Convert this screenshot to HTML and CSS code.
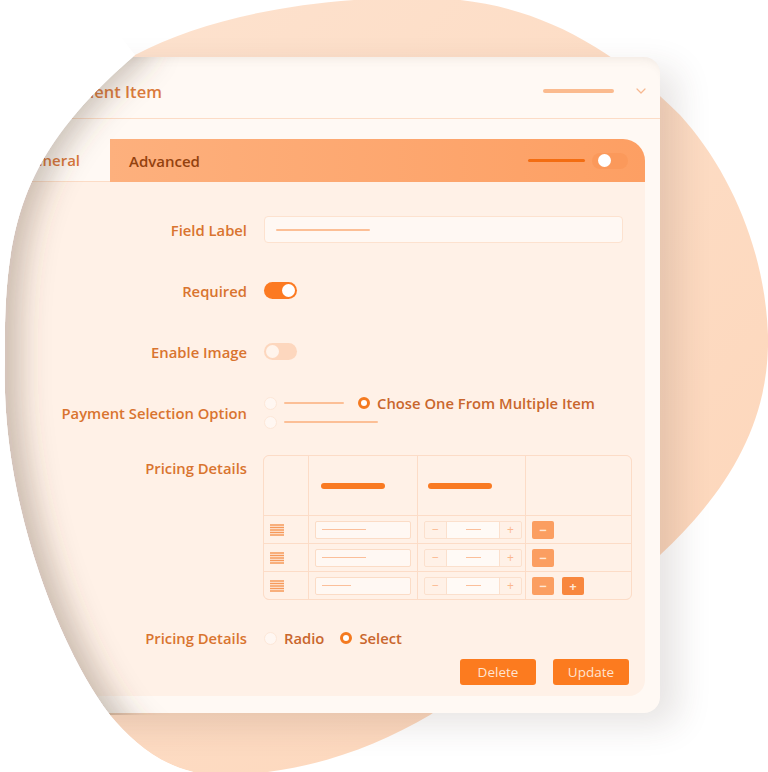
FILE: index.html
```html
<!DOCTYPE html>
<html lang="en">
<head>
    <meta charset="UTF-8">
    <meta name="viewport" content="width=device-width, initial-scale=1.0">
    <title>Payment Item</title>
    <link rel="stylesheet" href="styles.css">
</head>
<body>
    <div class="stage">
        <!-- peach blob behind the card -->
        <svg class="blob" viewBox="0 0 768 772" width="768" height="772">
            <defs>
                <linearGradient id="blobFill" x1="0" y1="0" x2="1" y2="1">
                    <stop offset="0" stop-color="#fde3d0"/>
                    <stop offset="1" stop-color="#fdd5b8"/>
                </linearGradient>
            </defs>
            <path fill="url(#blobFill)" d="M135 55 C210 15 320 -4 430 -2 C520 0 600 35 680 115 C730 170 765 250 768 335 C770 420 730 490 660 555 L430 715 C370 750 300 775 220 775 C170 775 135 745 110 715 C60 650 0 500 5 360 C3 220 25 150 135 55 Z"/>
        </svg>

        <div class="card">
            <div class="card-head">
                <span class="card-title">Payment Item</span>
                <span class="head-bar"></span>
                <svg class="chevron" width="10" height="6" viewBox="0 0 10 6">
                    <polyline points="1,1 5,5 9,1" fill="none" stroke="#f7b890" stroke-width="1.2" stroke-linecap="round" stroke-linejoin="round"/>
                </svg>
            </div>

            <div class="card-body">
                <div class="tabs">
                    <div class="tab tab-general">General</div>
                    <div class="tab tab-advanced">
                        <span>Advanced</span>
                        <span class="tab-line"></span>
                        <span class="switch switch-tab"></span>
                    </div>
                </div>

                <div class="panel">
                    <div class="form-row">
                        <label>Field Label</label>
                        <div class="text-input"><span class="ph"></span></div>
                    </div>

                    <div class="form-row">
                        <label>Required</label>
                        <div><span class="switch switch-on"></span></div>
                    </div>

                    <div class="form-row">
                        <label>Enable Image</label>
                        <div><span class="switch switch-off"></span></div>
                    </div>

                    <div class="form-row row-payment">
                        <label>Payment Selection Option</label>
                        <div class="radio-stack">
                            <div class="radio-line">
                                <span class="radio"></span>
                                <span class="ph ph-short"></span>
                                <span class="radio radio-checked"></span>
                                <span class="radio-text">Chose One From Multiple Item</span>
                            </div>
                            <div class="radio-line">
                                <span class="radio"></span>
                                <span class="ph ph-long"></span>
                            </div>
                        </div>
                    </div>

                    <div class="form-row row-table">
                        <label>Pricing Details</label>
                        <div class="price-table">
                            <div class="cell"></div>
                            <div class="cell head"><span class="head-pill"></span></div>
                            <div class="cell head head-qty"><span class="head-pill"></span></div>
                            <div class="cell"></div>

                            <div class="cell handle"><svg width="14" height="12" viewBox="0 0 14 12"><path d="M0 1h14M0 3.5h14M0 6h14M0 8.5h14M0 11h14" stroke="#f6995a" stroke-width="1.3"/></svg></div>
                            <div class="cell"><div class="mini-input"><span class="mini-line"></span></div></div>
                            <div class="cell"><div class="stepper"><span class="step">&minus;</span><span class="step-mid"><span class="mini-dash"></span></span><span class="step">+</span></div></div>
                            <div class="cell actions"><span class="act act-minus">&minus;</span></div>

                            <div class="cell handle"><svg width="14" height="12" viewBox="0 0 14 12"><path d="M0 1h14M0 3.5h14M0 6h14M0 8.5h14M0 11h14" stroke="#f6995a" stroke-width="1.3"/></svg></div>
                            <div class="cell"><div class="mini-input"><span class="mini-line"></span></div></div>
                            <div class="cell"><div class="stepper"><span class="step">&minus;</span><span class="step-mid"><span class="mini-dash"></span></span><span class="step">+</span></div></div>
                            <div class="cell actions"><span class="act act-minus">&minus;</span></div>

                            <div class="cell handle"><svg width="14" height="12" viewBox="0 0 14 12"><path d="M0 1h14M0 3.5h14M0 6h14M0 8.5h14M0 11h14" stroke="#f6995a" stroke-width="1.3"/></svg></div>
                            <div class="cell"><div class="mini-input"><span class="mini-line mini-line-short"></span></div></div>
                            <div class="cell"><div class="stepper"><span class="step">&minus;</span><span class="step-mid"><span class="mini-dash"></span></span><span class="step">+</span></div></div>
                            <div class="cell actions"><span class="act act-minus">&minus;</span><span class="act act-plus">+</span></div>
                        </div>
                    </div>

                    <div class="form-row row-type">
                        <label>Pricing Details</label>
                        <div class="radio-line">
                            <span class="radio"></span>
                            <span class="radio-text">Radio</span>
                            <span class="radio radio-checked"></span>
                            <span class="radio-text">Select</span>
                        </div>
                    </div>

                    <div class="button-row">
                        <button class="btn">Delete</button>
                        <button class="btn">Update</button>
                    </div>
                </div>
            </div>
        </div>

        <!-- white mask that cuts the card along the blob edge -->
        <svg class="edge-mask" viewBox="0 0 768 772" width="768" height="772">
            <defs>
                <filter id="edgeShadow" x="-50%" y="-10%" width="200%" height="120%">
                    <feDropShadow dx="16" dy="0" stdDeviation="14" flood-color="#5a4638" flood-opacity="0.3"/>
                </filter>
                <clipPath id="cardArea">
                    <rect x="-40" y="57" width="840" height="658"/>
                </clipPath>
            </defs>
            <g clip-path="url(#cardArea)">
                <path fill="#ffffff" filter="url(#edgeShadow)" d="M-40 -40 L135 -40 L135 55 C25 150 3 220 5 360 C0 500 60 650 110 715 C135 745 170 775 220 775 L220 820 L-40 820 Z"/>
            </g>
            <path fill="#ffffff" d="M-40 -40 L60 -40 L135 55 C25 150 3 220 5 360 C0 500 60 650 110 715 C135 745 170 775 220 775 L220 820 L-40 820 Z"/>
        </svg>
    </div>
</body>
</html>
```

FILE: styles.css
```css
/* Payment item card illustration */
body {
    margin: 0;
    padding: 0;
    background-color: #fff;
    font-family: "Open Sans", "Lato", sans-serif;
}

.stage {
    position: relative;
    width: 768px;
    height: 772px;
    overflow: hidden;
    background-color: #fff;
}

.blob,
.edge-mask {
    position: absolute;
    left: 0;
    top: 0;
}

.card {
    position: absolute;
    left: -10px;
    top: 57px;
    width: 670px;
    background-color: #fff9f4;
    border-radius: 16px;
    box-shadow: 18px 12px 34px rgba(70, 50, 40, 0.13), inset 0 10px 12px -10px rgba(90, 70, 60, 0.12);
}

/* header */
.card-head {
    display: flex;
    align-items: center;
    box-sizing: border-box;
    height: 62px;
    padding: 7px 14px 0 60px;
    border-bottom: 1px solid #fcdcc6;
}

.card-title {
    font-size: 16.5px;
    font-weight: 600;
    color: #dc7b3c;
}

.head-bar {
    width: 71px;
    height: 4px;
    margin-left: auto;
    margin-right: 22px;
    border-radius: 2px;
    background-color: #fbbb8f;
}

.chevron {
    display: block;
}

/* tabs */
.card-body {
    padding: 20px 15px 17px 0;
}

.tabs {
    display: flex;
    height: 43px;
}

.tab {
    display: flex;
    align-items: center;
    box-sizing: border-box;
    font-size: 15px;
    font-weight: 600;
}

.tab-general {
    width: 120px;
    padding-left: 33px;
    color: #d9763a;
    border-bottom: 1px solid #fcdcc6;
}

.tab-advanced {
    flex: 1;
    padding: 0 17px 0 19px;
    color: #93420f;
    border-top-right-radius: 22px;
    background: linear-gradient(90deg, #fdb07d, #fd9f63);
}

.tab-line {
    width: 57px;
    height: 3px;
    margin-left: auto;
    margin-right: 7px;
    border-radius: 2px;
    background-color: #f36d12;
}

/* switches */
.switch {
    position: relative;
    display: block;
    border-radius: 9px;
}

.switch::after {
    content: "";
    position: absolute;
    top: 2px;
    width: 13px;
    height: 13px;
    border-radius: 50%;
    background-color: #fff;
}

.switch-tab {
    width: 36px;
    height: 16px;
    background-color: #fb995b;
}

.switch-tab::after {
    top: 1.5px;
    left: 6px;
}

.switch-on {
    width: 33px;
    height: 17px;
    background-color: #fc7a22;
}

.switch-on::after {
    right: 2px;
}

.switch-off {
    width: 33px;
    height: 17px;
    background-color: #fdd7be;
}

.switch-off::after {
    left: 2px;
    background-color: #fff4ec;
}

/* form panel */
.panel {
    padding: 34px 14px 11px 0;
    background-color: #fff1e7;
    border-bottom-right-radius: 16px;
}

.form-row {
    display: grid;
    grid-template-columns: 257px 1fr;
    column-gap: 17px;
    align-items: center;
    min-height: 27px;
    margin-bottom: 34px;
}

.form-row label {
    text-align: right;
    font-size: 14.8px;
    font-weight: 600;
    color: #d9742f;
}

.text-input {
    display: flex;
    align-items: center;
    box-sizing: border-box;
    width: 359px;
    height: 27px;
    padding-left: 11px;
    background-color: #fff8f3;
    border: 1px solid #fde2cf;
    border-radius: 4px;
}

.ph {
    display: block;
    width: 94px;
    height: 2px;
    border-radius: 1px;
    background-color: #fcbf96;
}

.row-payment {
    margin-top: -3px;
    margin-bottom: 26px;
}

.radio-stack {
    display: flex;
    flex-direction: column;
    gap: 5px;
}

.radio-line {
    display: flex;
    align-items: center;
    height: 14px;
}

.radio {
    box-sizing: border-box;
    width: 13px;
    height: 13px;
    border-radius: 50%;
    background-color: #fff7f2;
    border: 1px solid #fde7d8;
}

.radio-checked {
    width: 12px;
    height: 12px;
    background-color: #fff;
    border: 3.5px solid #f47a20;
}

.radio-text {
    margin-left: 7px;
    font-size: 14.8px;
    font-weight: 600;
    color: #c9662d;
}

.ph-short {
    width: 60px;
    margin: 0 14px 0 7px;
}

.ph-long {
    width: 94px;
    margin-left: 7px;
}

/* pricing table */
.row-table {
    align-items: start;
    margin-bottom: 25px;
}

.row-table label {
    padding-top: 3px;
}

.price-table {
    display: grid;
    grid-template-columns: 44px 108px 107px 105px;
    grid-template-rows: 59px 27px 27px 27px;
    gap: 1px;
    width: 369px;
    margin-left: -1px;
    box-sizing: border-box;
    background-color: #fcdcc7;
    border: 1px solid #fcdcc7;
    border-radius: 6px;
    overflow: hidden;
}

.cell {
    display: flex;
    align-items: center;
    padding-left: 6px;
    background-color: #fff1e7;
}

.head {
    padding-left: 12px;
}

.head-qty {
    padding-left: 10px;
}

.head-pill {
    width: 64px;
    height: 6px;
    border-radius: 3px;
    background-color: #f97a22;
}

.handle svg {
    display: block;
}

.mini-input {
    display: flex;
    align-items: center;
    box-sizing: border-box;
    width: 96px;
    height: 18px;
    padding-left: 6px;
    background-color: #fff8f3;
    border: 1px solid #fbdcc6;
    border-radius: 2px;
}

.mini-line {
    width: 44px;
    height: 1px;
    background-color: #fbbf9a;
}

.mini-line-short {
    width: 29px;
}

.stepper {
    display: flex;
    height: 18px;
    box-sizing: border-box;
    border: 1px solid #fbe0cd;
    border-radius: 2px;
}

.step {
    width: 21px;
    text-align: center;
    font-size: 12px;
    line-height: 16px;
    color: #fbb78d;
}

.step-mid {
    display: flex;
    align-items: center;
    justify-content: center;
    width: 52px;
    background-color: #fffaf6;
    border-left: 1px solid #fbe0cd;
    border-right: 1px solid #fbe0cd;
}

.mini-dash {
    width: 15px;
    height: 1px;
    background-color: #fbbf9a;
}

.actions {
    gap: 8px;
}

.act {
    width: 22px;
    height: 18px;
    text-align: center;
    font-size: 13px;
    font-weight: 700;
    line-height: 18px;
    color: #ffe6d4;
    border-radius: 2px;
}

.act-minus {
    background-color: #fb9e61;
}

.act-plus {
    background-color: #f8873e;
}

/* bottom row */
.row-type {
    min-height: 26px;
    margin-bottom: 8px;
}

.row-type .radio-text {
    margin-right: 16px;
}

.button-row {
    display: flex;
    justify-content: flex-end;
    gap: 17px;
    padding-right: 2px;
}

.btn {
    width: 76px;
    height: 26px;
    padding: 0;
    font-family: inherit;
    font-size: 13.5px;
    color: #ffe4d1;
    background-color: #fc7b1f;
    border: none;
    border-radius: 3px;
}
```
